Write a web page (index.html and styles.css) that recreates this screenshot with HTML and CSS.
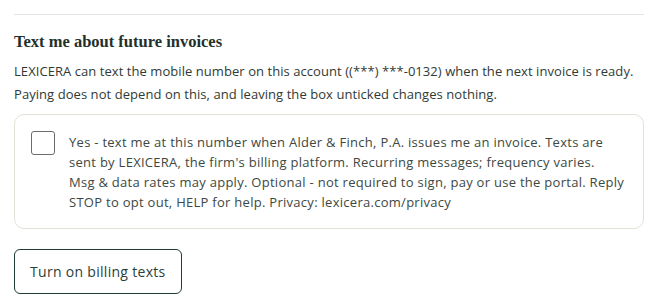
FILE: index.html
```html
<!DOCTYPE html>
<html lang="en">
<head>
  <meta charset="UTF-8" />
  <meta name="viewport" content="width=device-width, initial-scale=1" />
  <title>Billing texts</title>
  <link rel="stylesheet" href="styles.css">
</head>
<body>
  <section class="sms-optin">
    <h2>Text me about future invoices</h2>
    <p class="intro">LEXICERA can text the mobile number on this account ((***) ***-0132) when the next invoice is ready. Paying does not depend on this, and leaving the box unticked changes nothing.</p>
    <label class="consent">
      <input type="checkbox" id="smsConsent" />
      <span>Yes - text me at this number when Alder &amp; Finch, P.A. issues me an invoice. Texts are sent by LEXICERA, the firm's billing platform. Recurring messages; frequency varies.<br>Msg &amp; data rates may apply. Optional - not required to sign, pay or use the portal. Reply STOP to opt out, HELP for help. Privacy: lexicera.com/privacy</span>
    </label>
    <button id="enableBtn">Turn on billing texts</button>
  </section>
</body>
</html>
```

FILE: styles.css
```css
body {
  margin: 0;
  padding: 14px 14px 0;
  background-color: #fff;
  font-family: "Open Sans", sans-serif;
  color: #2f3a35;
}
.sms-optin {
  border-top: 1px solid #e4e4e1;
  padding-top: 17px;
}
h2 {
  margin: 0 0 8px;
  font-family: "Liberation Serif", serif;
  font-size: 16.5px;
  font-weight: bold;
  color: #22302b;
}
.intro {
  margin: 0 0 8px;
  font-size: 13px;
  line-height: 23px;
  letter-spacing: 0.06px;
  color: #303a35;
}
.consent {
  display: flex;
  gap: 14px;
  align-items: flex-start;
  padding: 16px;
  border: 1px solid #e3e2d9;
  border-radius: 10px;
  font-size: 13px;
  font-weight: 500;
  line-height: 20px;
  letter-spacing: 0.28px;
  color: #3d4842;
  cursor: pointer;
}
.consent span {
  margin-top: 1px;
}
.consent input {
  appearance: none;
  flex: 0 0 24px;
  width: 24px;
  height: 24px;
  margin: 0;
  border: 1px solid #6b6b6b;
  border-radius: 3px;
  background: #fff;
}
.consent input:checked {
  background: #1f3d33;
}
button {
  margin-top: 20px;
  padding: 12px 15px;
  font-family: "Open Sans", sans-serif;
  font-size: 14px;
  font-weight: 500;
  line-height: 19px;
  letter-spacing: 0.3px;
  color: #2a3f37;
  background: #fff;
  border: 1px solid #1f3d33;
  border-radius: 6px;
  cursor: pointer;
}
```
